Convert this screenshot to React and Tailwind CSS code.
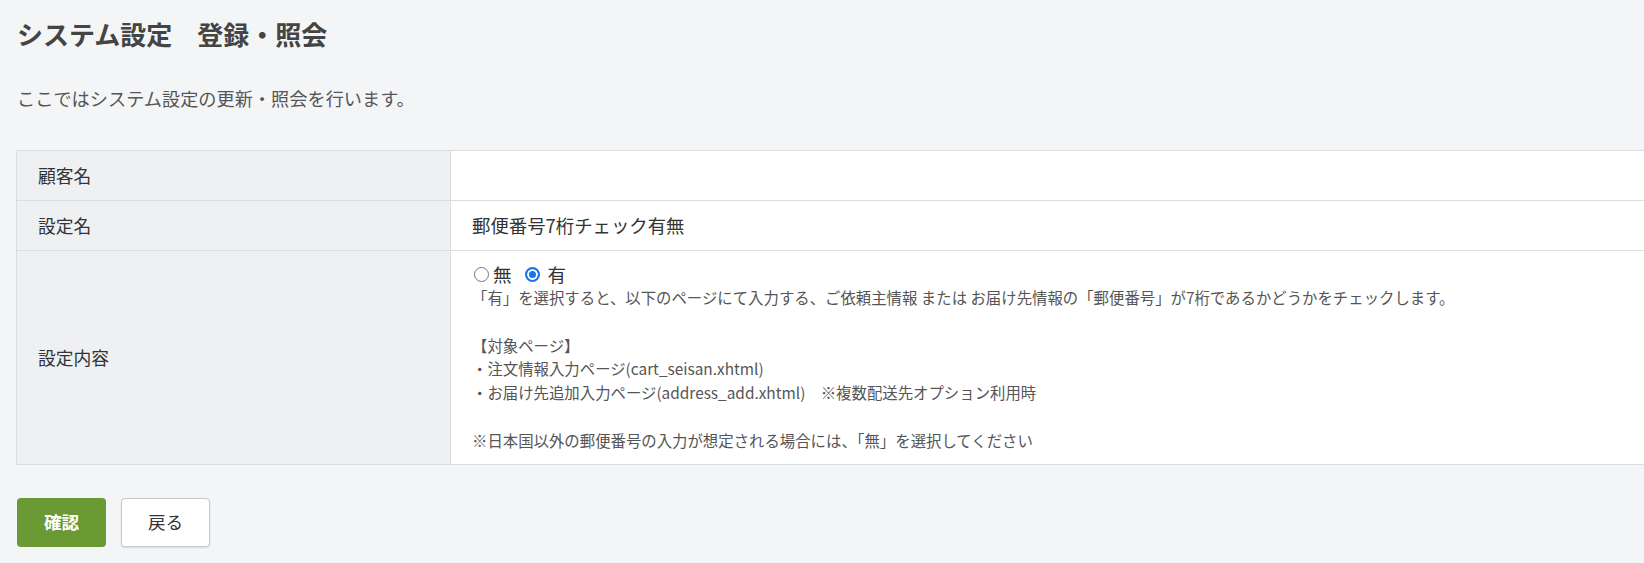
import { useState } from 'react';

const font = { fontFamily: '"Noto Sans CJK JP", "Noto Sans", sans-serif' };

function Row({ label, children, className = '' }) {
  return (
    <div className="grid grid-cols-[435px_1fr] border-b border-[#dcdde0]">
      <div className="flex items-center border-l border-r border-[#dcdde0] bg-[#eef0f2] pl-[21px] text-[17.8px] text-[#333]">
        {label}
      </div>
      <div className={`bg-white pl-[21px] text-[18.4px] text-[#333] ${className}`}>{children}</div>
    </div>
  );
}

const radioClass =
  'm-0 h-[15px] w-[15px] appearance-none rounded-full border border-[#767676] bg-white checked:border-2 checked:border-[#1a73e8] checked:bg-[#1a73e8] checked:shadow-[inset_0_0_0_2px_white]';

export default function App() {
  const [value, setValue] = useState('1');

  return (
    <div style={font} className="min-h-[563px] overflow-hidden bg-[#f4f5f7] pl-[16px] pt-[16px]">
      <h1 className="flex h-[36px] items-center pl-[1px] text-[26px] font-bold leading-none text-[#444]">
        <span>システム設定</span>
        <span className="ml-[25px]">登録・照会</span>
      </h1>
      <p className="mt-[33px] pl-[1px] text-[18.2px] leading-[26px] text-[#555]">
        ここではシステム設定の更新・照会を行います。
      </p>

      <div className="mt-[39px] border-t border-[#dcdde0]">
        <Row label="顧客名" className="h-[49px]" />
        <Row label="設定名" className="flex h-[49px] items-center">
          郵便番号7桁チェック有無
        </Row>
        <Row label="設定内容" className="pb-[11px] pt-[11px]">
          <div className="flex h-[24px] items-center text-[18.6px] leading-[24px] text-[#333]">
            <label className="flex items-center">
              <input
                type="radio"
                name="zip"
                checked={value === '0'}
                onChange={() => setValue('0')}
                className={`ml-[2px] ${radioClass}`}
              />
              <span className="ml-[4px]">無</span>
            </label>
            <label className="ml-[13px] flex items-center">
              <input
                type="radio"
                name="zip"
                checked={value === '1'}
                onChange={() => setValue('1')}
                className={radioClass}
              />
              <span className="ml-[8px]">有</span>
            </label>
          </div>
          <div className="text-[15.4px] leading-[23.8px] text-[#555]">
            <p>「有」を選択すると、以下のページにて入力する、ご依頼主情報 または お届け先情報の「郵便番号」が7桁であるかどうかをチェックします。</p>
            <p>&nbsp;</p>
            <p>【対象ページ】</p>
            <p>・注文情報入力ページ(cart_seisan.xhtml)</p>
            <p>・お届け先追加入力ページ(address_add.xhtml)　※複数配送先オプション利用時</p>
            <p>&nbsp;</p>
            <p>※日本国以外の郵便番号の入力が想定される場合には、「無」を選択してください</p>
          </div>
        </Row>
      </div>

      <div className="mt-[33px] flex gap-[15px] pl-[1px]">
        <button
          type="button"
          className="h-[49px] w-[89px] rounded-[4px] bg-[#6b9a34] text-[17.6px] font-bold text-white"
        >
          確認
        </button>
        <button
          type="button"
          className="h-[49px] w-[89px] rounded-[4px] border border-[#c8c9cc] bg-white text-[17.6px] text-[#333] shadow-[0_1px_2px_rgba(0,0,0,0.12)]"
        >
          戻る
        </button>
      </div>
    </div>
  );
}
